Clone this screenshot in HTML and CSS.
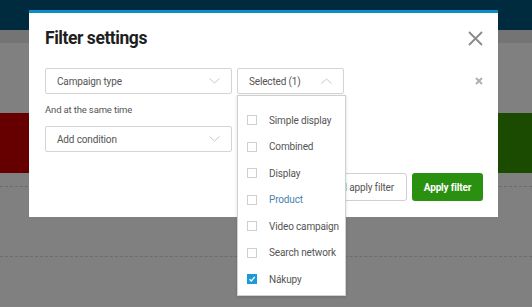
FILE: index.html
```html
<!DOCTYPE html>
<html lang="en">
<head>
  <meta charset="UTF-8">
  <meta name="viewport" content="width=device-width, initial-scale=1.0">
  <title>Filter settings</title>
  <link rel="stylesheet" href="styles.css">
</head>
<body>
  <div class="page">
    <header class="topbar"></header>
    <div class="subbar"></div>
    <div class="content">
      <div class="row-status">
        <div class="cell-red"></div>
        <div class="cell-green"></div>
      </div>
      <div class="dash first"></div>
      <div class="dash"></div>
    </div>
  </div>

  <div class="modal">
    <div class="modal-head">
      <h2>Filter settings</h2>
      <button class="close" aria-label="Close">
        <svg width="15" height="15" viewBox="0 0 15 15"><path d="M1 1L14 14M14 1L1 14" stroke="#8a8a8a" stroke-width="1.8"/></svg>
      </button>
    </div>

    <div class="filter-row">
      <div class="select wide">
        <span>Campaign type</span>
        <svg class="chev" width="11" height="6" viewBox="0 0 11 6"><path d="M0.5 0.5L5.5 5L10.5 0.5" fill="none" stroke="#c8c8c8"/></svg>
      </div>
      <div class="select narrow open">
        <span>Selected (1)</span>
        <svg class="chev" width="11" height="6" viewBox="0 0 11 6"><path d="M0.5 5.5L5.5 1L10.5 5.5" fill="none" stroke="#c8c8c8"/></svg>
      </div>
      <button class="remove" aria-label="Remove">
        <svg width="8" height="8" viewBox="0 0 8 8"><path d="M1 1L7 7M7 1L1 7" stroke="#b0b0b0" stroke-width="2"/></svg>
      </button>
    </div>

    <p class="label">And at the same time</p>

    <div class="filter-row">
      <div class="select wide">
        <span>Add condition</span>
        <svg class="chev" width="11" height="6" viewBox="0 0 11 6"><path d="M0.5 0.5L5.5 5L10.5 0.5" fill="none" stroke="#c8c8c8"/></svg>
      </div>
    </div>

    <div class="modal-foot">
      <button class="btn btn-outline">Save and apply filter</button>
      <button class="btn btn-green">Apply filter</button>
    </div>

    <ul class="dropdown">
      <li><span class="check"></span>Simple display</li>
      <li><span class="check"></span>Combined</li>
      <li><span class="check"></span>Display</li>
      <li class="hover"><span class="check"></span>Product</li>
      <li><span class="check"></span>Video campaign</li>
      <li><span class="check"></span>Search network</li>
      <li><span class="check checked"><svg width="10" height="10" viewBox="0 0 10 10"><path d="M2.5 5.2L4.3 7L7.8 2.8" fill="none" stroke="#fff" stroke-width="1.3"/></svg></span>Nákupy</li>
    </ul>
  </div>
</body>
</html>
```

FILE: styles.css
```css
body {
  margin: 0;
  font-family: 'Roboto', 'Liberation Sans', sans-serif;
  background-color: #808080;
  overflow: hidden;
}
.page {
  height: 307px;
}
.topbar {
  height: 30px;
  background-color: #002b3e;
}
.subbar {
  height: 13px;
  background-color: #747474;
}
.content {
  padding-top: 70px;
}
.row-status {
  display: flex;
  justify-content: space-between;
  height: 60px;
}
.cell-red {
  width: 40px;
  background-color: #660000;
}
.cell-green {
  width: 40px;
  background-color: #1a4b00;
}
.dash {
  border-top: 1px dashed #6c6c6c;
  margin-top: 69px;
}
.dash.first {
  margin-top: 13px;
}

.modal {
  position: absolute;
  left: 29px;
  top: 10px;
  width: 469px;
  height: 207px;
  box-sizing: border-box;
  background-color: #fff;
  border-top: 3px solid #0b8ec6;
  padding: 0 15px 0 16px;
}
.modal-head {
  display: flex;
  justify-content: space-between;
  align-items: center;
  height: 50px;
  margin-bottom: 5px;
}
.modal-head h2 {
  margin: 0;
  font-size: 17.5px;
  font-weight: 700;
  color: #1e1e1e;
  letter-spacing: -0.45px;
}
.close {
  border: none;
  background: none;
  padding: 0;
  display: flex;
}
.filter-row {
  display: flex;
  align-items: center;
  gap: 5px;
}
.select {
  display: flex;
  justify-content: space-between;
  align-items: center;
  height: 26px;
  box-sizing: border-box;
  border: 1px solid #d4d4d4;
  border-radius: 2px;
  padding: 0 11px;
  font-size: 10px;
  letter-spacing: -0.15px;
  color: #555;
}
.select.wide {
  width: 187px;
}
.select.narrow {
  width: 107px;
}
.remove {
  border: none;
  background: none;
  padding: 0;
  display: flex;
  margin-left: auto;
}
.label {
  margin: 10px 0 11px;
  font-size: 9.5px;
  letter-spacing: -0.15px;
  color: #555;
}
.modal-foot {
  display: flex;
  justify-content: flex-end;
  gap: 5px;
  margin-top: 21px;
}
.btn {
  height: 28px;
  border-radius: 3px;
  font-family: inherit;
  font-size: 10px;
  letter-spacing: -0.15px;
  padding: 0 12px;
  white-space: nowrap;
}
.btn-outline {
  background: #fff;
  border: 1px solid #d0d0d0;
  color: #555;
}
.btn-green {
  background: #2a9010;
  border: none;
  color: #fff;
  font-weight: 700;
  width: 71px;
  padding: 0;
}

.dropdown {
  position: absolute;
  left: 208px;
  top: 82px;
  width: 107px;
  margin: 0;
  padding: 11px 0 2px;
  list-style: none;
  background: #fff;
  border: 1px solid #d0d0d0;
  box-shadow: 0 1px 3px rgba(0, 0, 0, 0.15);
}
.dropdown li {
  display: flex;
  align-items: center;
  gap: 12px;
  height: 26.5px;
  padding-left: 9px;
  font-size: 10px;
  letter-spacing: -0.15px;
  color: #555;
}
.dropdown li.hover {
  color: #4a82ad;
}
.check {
  width: 10px;
  height: 10px;
  box-sizing: border-box;
  border: 1px solid #cfcfcf;
  display: flex;
}
.check.checked {
  background: #1a9ad6;
  border-color: #1a9ad6;
}
.check svg {
  margin: -1px;
}
```
